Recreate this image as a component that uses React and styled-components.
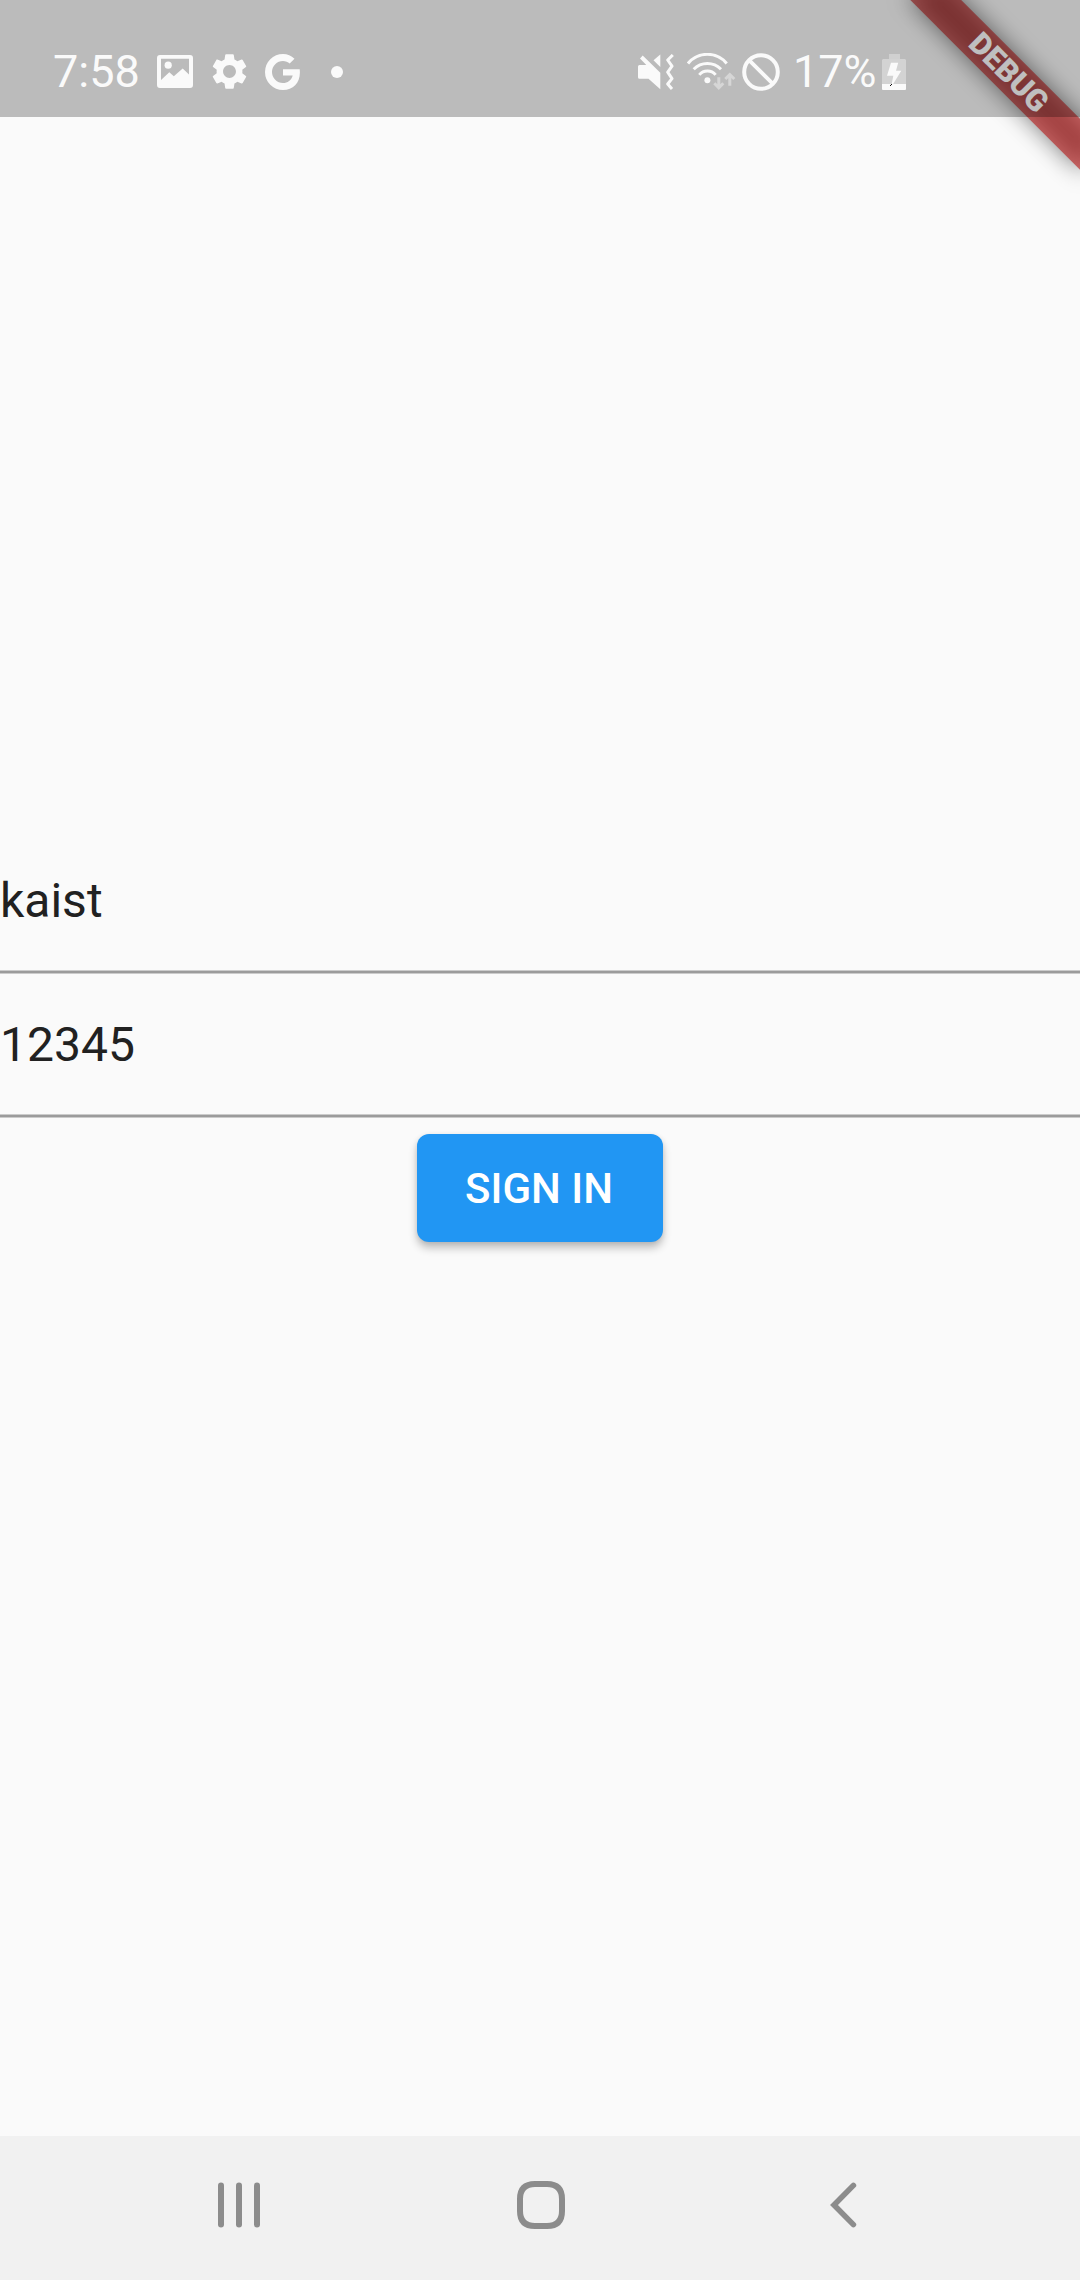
import React from "react";
import styled, { createGlobalStyle } from "styled-components";
import { MdSettings } from "react-icons/md";

const GlobalStyle = createGlobalStyle`
  *, *::before, *::after { box-sizing: border-box; }
  body { margin: 0; background: #fafafa; font-family: Roboto, "Noto Sans", sans-serif; }
`;

const Screen = styled.div`
  position: relative;
  display: flex;
  flex-direction: column;
  width: 1080px;
  height: 2280px;
  overflow: hidden;
  background: #fafafa;
`;

const StatusBar = styled.header`
  position: relative;
  z-index: 2;
  display: flex;
  align-items: center;
  justify-content: space-between;
  flex: none;
  height: 117px;
  padding: 26px 174px 0 53px;
  background: rgba(0, 0, 0, 0.25);
  color: #fafafa;
`;

const StatusGroup = styled.div`
  display: flex;
  align-items: center;
`;

const StatusText = styled.span`
  width: ${(p) => p.$width}px;
  margin-left: ${(p) => p.$gap || 0}px;
  padding-top: 1px;
  font-size: 45px;
  line-height: 52px;
  white-space: nowrap;
`;

const Glyph = styled.svg`
  display: block;
  flex: none;
  margin-left: ${(p) => p.$gap || 0}px;
`;

const Gear = styled(MdSettings)`
  display: block;
  flex: none;
  width: 43px;
  height: 43px;
  margin-left: 14.5px;
`;

const Dot = styled.span`
  width: 12px;
  height: 12px;
  margin-left: 31px;
  border-radius: 50%;
  background: #fafafa;
`;

const Banner = styled.div`
  position: absolute;
  z-index: 1;
  top: 84px;
  left: 960px;
  width: 240px;
  height: 36px;
  transform: rotate(45deg);
  transform-origin: 120px -84px;

  &::before {
    content: "";
    position: absolute;
    inset: 0;
    background: rgba(0, 0, 0, 0.5);
    filter: blur(11.9px);
  }
`;

const BannerLabel = styled.div`
  position: relative;
  height: 36px;
  padding-left: 2px;
  background: rgba(183, 28, 28, 0.627);
  color: #fff;
  font-size: 30.6px;
  font-weight: 900;
  line-height: 35px;
  text-align: center;
`;

const Form = styled.main`
  display: flex;
  flex: 1;
  flex-direction: column;
  align-items: center;
  padding-top: 713px;
`;

const Field = styled.div`
  display: flex;
  flex-direction: column;
  justify-content: space-between;
  width: 100%;
  height: 144px;
  padding-top: 43px;
  color: #212121;
  font-size: 48px;
  line-height: 56px;
`;

const Underline = styled.div`
  height: 4px;
  border: solid #cbcbcb;
  border-width: 1px 0;
  background: #9b9b9b;
`;

const SignInButton = styled.button`
  width: 246px;
  height: 108px;
  margin: 16px 0 0;
  padding: 2px 2px 0 0;
  border: 0;
  border-radius: 12px;
  background: #2196f3;
  box-shadow: 0 6px 9px rgba(0, 0, 0, 0.24), 0 1px 5px rgba(0, 0, 0, 0.08);
  color: #fff;
  font-family: inherit;
  font-size: 42px;
  font-weight: 500;
  line-height: 48px;
  white-space: nowrap;
`;

const NavBar = styled.nav`
  display: flex;
  flex: none;
  height: 144px;
  padding: 0 86px 0 88px;
  background: #f1f1f1;
`;

const NavItem = styled.div`
  display: flex;
  align-items: center;
  justify-content: center;
  width: 302px;
  padding-bottom: 6px;
  color: #8c8c8c;
`;

const PictureIcon = () => (
  <Glyph $gap={19} width="36" height="33" viewBox="0 0 36 33" fill="currentColor">
    <path
      fillRule="evenodd"
      d="M3 0H33Q36 0 36 3V30Q36 33 33 33H3Q0 33 0 30V3Q0 0 3 0ZM4 3.8V25L12.3 17.3L16.8 21.3L25.7 13.6L32 19.6V3.8Z"
    />
    <circle cx="11.2" cy="10.2" r="3.6" />
  </Glyph>
);

const GoogleIcon = () => (
  <Glyph $gap={14.5} width="35" height="36" viewBox="0 0 35 36" fill="currentColor">
    <path d="M34.7 15.3H18V21.4H27.7C26.4 26 22.6 29 18 29A11 11 0 1 1 18 7C20.6 7 22.9 7.9 24.7 9.6L29.5 4.8C26.4 1.8 22.4 0 18 0A18 18 0 1 0 18 36C28 36 34.9 29 34.9 18.4C34.9 17.3 34.8 16.3 34.7 15.3Z" />
  </Glyph>
);

const MuteVibrateIcon = () => (
  <Glyph width="36" height="36" viewBox="0 0 36 36" fill="currentColor">
    <path d="M1.5 11H8.3L2 4.6L4.7 1.5L22.3 18.7V35.3L10.5 24.7H1.5Q0 24.7 0 23.2V12.5Q0 11 1.5 11Z" />
    <path d="M15.5 6.3L22.3 0.5V13Z" />
    <path
      d="M34.8 1L29.7 6L34 12.2L29.7 18.2L34 24.6L29.7 30L34 35"
      fill="none"
      stroke="currentColor"
      strokeWidth="3"
      strokeLinejoin="round"
    />
  </Glyph>
);

const WifiIcon = () => (
  <Glyph $gap={13} width="49" height="37" viewBox="0 0 49 37" fill="none" stroke="currentColor" strokeWidth="3">
    <path d="M1 10.5A25 25 0 0 1 39.7 10.5" />
    <path d="M6.7 16.2A19 19 0 0 1 34 16.2" />
    <path d="M12.3 21.9A10.5 10.5 0 0 1 28.6 21.9" />
    <circle cx="20.4" cy="27.3" r="3" fill="currentColor" stroke="none" />
    <g stroke="#d6d6d6" strokeWidth="3">
      <path d="M31.8 24.3V35M27.3 30.3L31.8 34.8L36.3 30.3" />
      <path d="M42.8 32.7V21.5M38.3 26L42.8 21.5L47.3 26" />
    </g>
  </Glyph>
);

const BlockedIcon = () => (
  <Glyph $gap={6} width="38" height="38" viewBox="0 0 38 38" fill="none" stroke="currentColor">
    <circle cx="19" cy="19" r="16.8" strokeWidth="4" />
    <path d="M7.3 7.3L30.7 30.7" strokeWidth="3.8" />
  </Glyph>
);

const BatteryIcon = () => (
  <Glyph width="24" height="36" viewBox="0 0 24 36">
    <path d="M7 0H18V5H7Z" fill="#d0d0d0" />
    <path d="M1 5H23L24 6V30H0V6Z" fill="#d3d3d3" />
    <path d="M0 30H24V35Q24 36 23 36H1Q0 36 0 35Z" fill="#fafafa" />
    <path d="M9 8.7H16.2L14 16.7H19.3L10.5 31H9.5L11.3 21.7H5Z" fill="#fafafa" />
    <path d="M8 31H9V30H10V31H9V32H8Z" fill="#111" />
  </Glyph>
);

const RecentsIcon = () => (
  <Glyph width="42" height="46" viewBox="0 0 42 46" fill="currentColor">
    {[0, 18, 36].map((x) => (
      <rect key={x} x={x} y="0.5" width="6" height="45" rx="3" />
    ))}
  </Glyph>
);

const HomeIcon = () => (
  <Glyph width="48" height="48" viewBox="0 0 48 48" fill="none" stroke="currentColor" strokeWidth="6">
    <path d="M18 3H30C40 3 45 8 45 18V30C45 40 40 45 30 45H18C8 45 3 40 3 30V18C3 8 8 3 18 3Z" />
  </Glyph>
);

const BackIcon = () => (
  <Glyph width="27" height="46" viewBox="0 0 27 46" fill="none" stroke="currentColor" strokeWidth="5.6" strokeLinecap="round">
    <path d="M23.4 3.4L4 23L23.4 42.6" />
  </Glyph>
);

export default function App() {
  return (
    <>
      <GlobalStyle />
      <Screen>
        <StatusBar>
          <StatusGroup>
            <StatusText $width={85}>7:58</StatusText>
            <PictureIcon />
            <Gear />
            <GoogleIcon />
            <Dot />
          </StatusGroup>
          <StatusGroup>
            <MuteVibrateIcon />
            <WifiIcon />
            <BlockedIcon />
            <StatusText $width={89} $gap={13}>17%</StatusText>
            <BatteryIcon />
          </StatusGroup>
        </StatusBar>
        <Form>
          <Field>
            kaist
            <Underline />
          </Field>
          <Field>
            12345
            <Underline />
          </Field>
          <SignInButton type="button">SIGN IN</SignInButton>
        </Form>
        <NavBar>
          <NavItem>
            <RecentsIcon />
          </NavItem>
          <NavItem>
            <HomeIcon />
          </NavItem>
          <NavItem>
            <BackIcon />
          </NavItem>
        </NavBar>
        <Banner>
          <BannerLabel>DEBUG</BannerLabel>
        </Banner>
      </Screen>
    </>
  );
}
